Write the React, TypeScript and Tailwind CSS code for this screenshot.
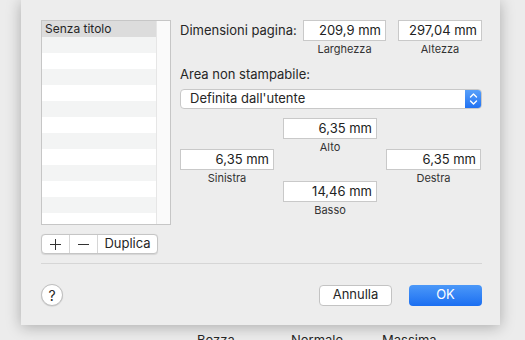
import React from "react";

const rows = Array.from({ length: 13 }, (_, i) => i);

function Field({ value, w }: { value: string; w: string }) {
  return (
    <div
      className={`${w} h-[21px] bg-white border border-[#c9c9c9] flex items-center justify-end pr-[4px] text-[13px] text-[#222]`}
    >
      {value}
    </div>
  );
}

function Caption({ children }: { children: React.ReactNode }) {
  return (
    <div className="text-[11px] leading-[13px] text-[#333] text-center mt-[2px]">
      {children}
    </div>
  );
}

function Stepper() {
  return (
    <svg width="9" height="14" viewBox="0 0 9 14" fill="none">
      <path d="M1.5 5L4.5 2L7.5 5" stroke="white" strokeWidth="1.4" strokeLinecap="round" strokeLinejoin="round" />
      <path d="M1.5 9L4.5 12L7.5 9" stroke="white" strokeWidth="1.4" strokeLinecap="round" strokeLinejoin="round" />
    </svg>
  );
}

export default function App() {
  return (
    <div
      className="w-[525px] h-[340px] overflow-hidden bg-[#ececec] text-[#262626]"
      style={{ fontFamily: "Inter, 'Liberation Sans', sans-serif" }}
    >
      <div className="ml-[21px] w-[479px] h-[325px] bg-[#ededed] shadow-[0_2px_14px_rgba(0,0,0,0.28)] pt-[20px] pl-[20px] pr-[18px] relative z-10">
        <div className="flex gap-[9px]">
          {/* preset list */}
          <div className="w-[130px] flex flex-col">
            <div className="h-[205px] border border-[#c6c6c6] bg-white flex overflow-hidden">
              <div className="flex-1 flex flex-col">
                {rows.map((i) => (
                  <div
                    key={i}
                    className={`h-[16px] shrink-0 text-[12px] leading-[16px] pl-[3px] ${
                      i === 0 ? "bg-[#dcdcdc]" : i % 2 === 1 ? "bg-[#f3f4f4]" : "bg-white"
                    }`}
                  >
                    {i === 0 ? "Senza titolo" : ""}
                  </div>
                ))}
              </div>
              <div className="w-[14px] bg-[#fafafa] border-l border-[#e6e6e6]" />
            </div>
            <div className="mt-[9px] w-[117px] h-[20px] flex bg-white border border-[#c5c5c5] rounded-[4px] shadow-[0_0.5px_1px_rgba(0,0,0,0.1)] text-[13px]">
              <div className="w-[28px] flex items-center justify-center border-r border-[#d6d6d6]">
                <svg width="11" height="11" viewBox="0 0 11 11">
                  <path d="M5.5 0V11M0 5.5H11" stroke="#333" strokeWidth="1" />
                </svg>
              </div>
              <div className="w-[28px] flex items-center justify-center border-r border-[#d6d6d6]">
                <svg width="11" height="11" viewBox="0 0 11 11">
                  <path d="M0 5.5H11" stroke="#333" strokeWidth="1" />
                </svg>
              </div>
              <div className="flex-1 flex items-center justify-center">Duplica</div>
            </div>
          </div>

          {/* settings */}
          <div className="flex-1 flex flex-col">
            <div className="flex items-start">
              <div className="flex-1 h-[21px] flex items-center text-[13px]">Dimensioni pagina:</div>
              <div className="w-[83px]">
                <Field value="209,9 mm" w="w-[83px]" />
                <Caption>Larghezza</Caption>
              </div>
              <div className="w-[84px] ml-[12px]">
                <Field value="297,04 mm" w="w-[84px]" />
                <Caption>Altezza</Caption>
              </div>
            </div>

            <div className="mt-[10px] text-[13px] leading-[16px]">Area non stampabile:</div>

            <div className="mt-[7px] h-[20px] flex bg-white border border-[#c8c8c8] rounded-[4px] overflow-hidden text-[13px]">
              <div className="flex-1 flex items-center pl-[9px]">Definita dall'utente</div>
              <div className="w-[17px] -my-px -mr-px rounded-r-[4px] bg-gradient-to-b from-[#5aa2fa] to-[#1d6ff2] flex items-center justify-center">
                <Stepper />
              </div>
            </div>

            <div className="mt-[9px] flex gap-[9px]">
              <div className="w-[94px] pt-[31px]">
                <Field value="6,35 mm" w="w-[94px]" />
                <Caption>Sinistra</Caption>
              </div>
              <div className="w-[94px]">
                <Field value="6,35 mm" w="w-[94px]" />
                <Caption>Alto</Caption>
                <div className="mt-[27px]">
                  <Field value="14,46 mm" w="w-[94px]" />
                  <Caption>Basso</Caption>
                </div>
              </div>
              <div className="w-[95px] pt-[31px]">
                <Field value="6,35 mm" w="w-[95px]" />
                <Caption>Destra</Caption>
              </div>
            </div>
          </div>
        </div>

        <div className="mt-[9px] h-px bg-[#d6d6d6]" />

        <div className="mt-[20px] flex items-center">
          <div className="w-[22px] h-[22px] rounded-full bg-white border border-[#bfbfbf] shadow-[0_0.5px_1px_rgba(0,0,0,0.15)] flex items-center justify-center text-[14px]">
            ?
          </div>
          <div className="flex-1" />
          <div className="w-[73px] h-[21px] bg-white border border-[#c3c3c3] rounded-[4px] flex items-center justify-center text-[13px]">
            Annulla
          </div>
          <div className="ml-[17px] w-[73px] h-[21px] rounded-[4px] bg-gradient-to-b from-[#4b98f8] to-[#1a6ef1] flex items-center justify-center text-[13px] text-white">
            OK
          </div>
        </div>
      </div>

      <div className="relative mt-[6px] h-[20px] text-[13px] text-[#262626]">
        <span className="absolute left-[197px] top-0">Bozza</span>
        <span className="absolute left-[291px] top-0">Normale</span>
        <span className="absolute left-[382px] top-0">Massima</span>
      </div>
    </div>
  );
}
